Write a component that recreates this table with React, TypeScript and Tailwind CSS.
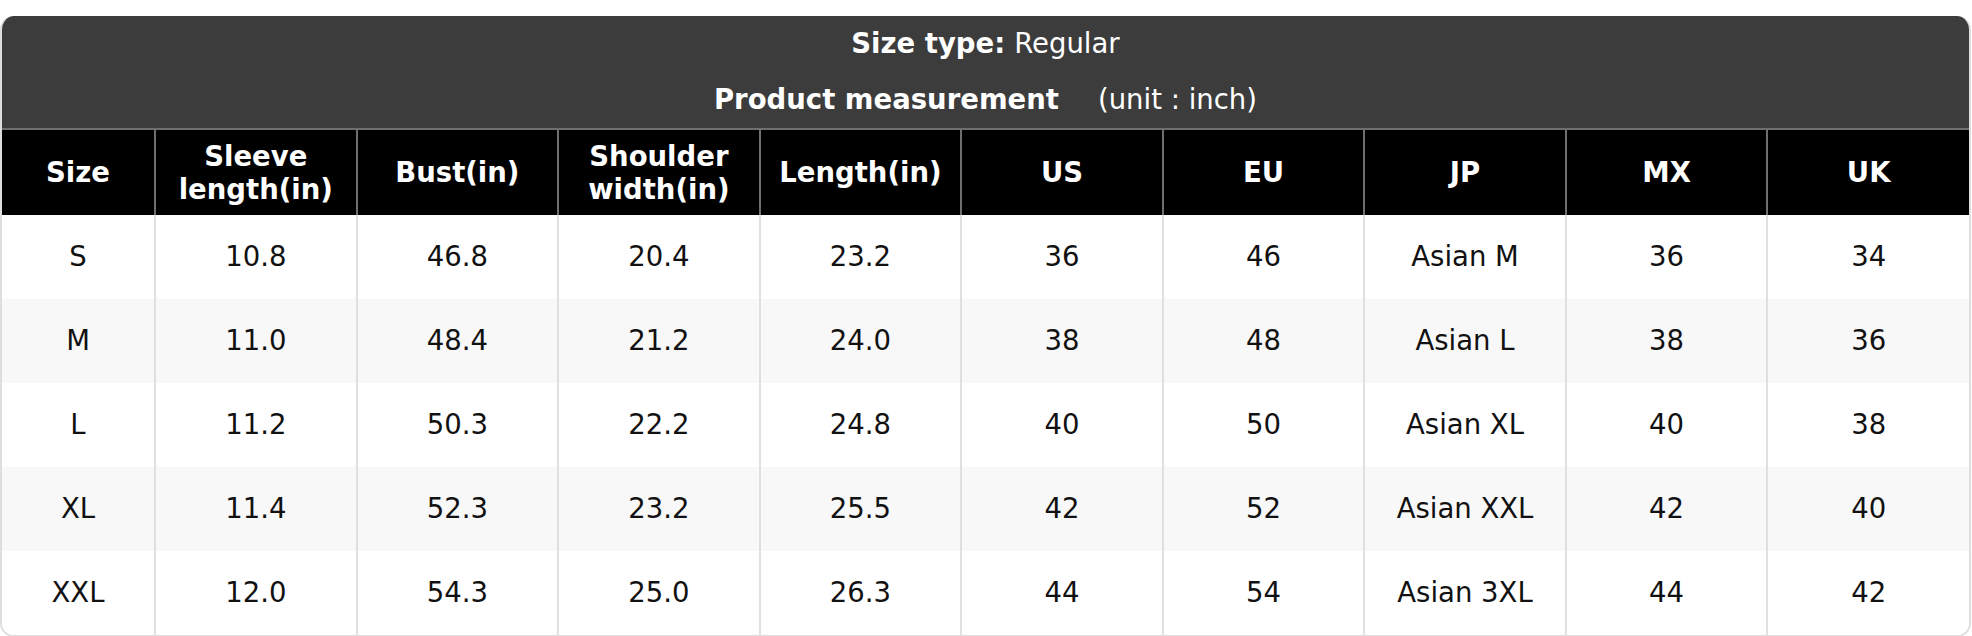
const columns = [
  "Size",
  "Sleeve length(in)",
  "Bust(in)",
  "Shoulder width(in)",
  "Length(in)",
  "US",
  "EU",
  "JP",
  "MX",
  "UK",
];

const rows = [
  ["S", "10.8", "46.8", "20.4", "23.2", "36", "46", "Asian M", "36", "34"],
  ["M", "11.0", "48.4", "21.2", "24.0", "38", "48", "Asian L", "38", "36"],
  ["L", "11.2", "50.3", "22.2", "24.8", "40", "50", "Asian XL", "40", "38"],
  ["XL", "11.4", "52.3", "23.2", "25.5", "42", "52", "Asian XXL", "42", "40"],
  ["XXL", "12.0", "54.3", "25.0", "26.3", "44", "54", "Asian 3XL", "44", "42"],
];

export default function App() {
  return (
    <div className="min-h-screen bg-white pt-[16px] font-['DejaVu_Sans',sans-serif] text-[27.5px]">
      <div className="w-[1971px] overflow-hidden rounded-[14px] border-x-2 border-b-2 border-[#dedede] bg-white">
        {/* Title block */}
        <div className="bg-[#3c3c3c] text-white">
          <div className="flex h-[56px] items-center justify-center">
            <span className="font-bold">Size type:</span>
            <span className="ml-[9px]">Regular</span>
          </div>
          <div className="flex h-[56px] items-center justify-center">
            <span className="font-bold">Product measurement</span>
            <span className="ml-[39px]">(unit : inch)</span>
          </div>
        </div>

        <table className="w-full table-fixed border-collapse">
          <colgroup>
            <col className="w-[153px]" />
            {columns.slice(1).map((c) => (
              <col key={c} />
            ))}
          </colgroup>
          <thead>
            <tr className="h-[86px] border-t-2 border-[#6f6f6f] bg-black text-white">
              {columns.map((c, i) => (
                <th
                  key={c}
                  className={`px-2 text-center align-middle font-bold leading-[33px] ${
                    i === 0 ? "" : "border-l-2 border-[#6f6f6f]"
                  }`}
                >
                  {c === "Sleeve length(in)" ? (
                    <>
                      Sleeve
                      <br />
                      length(in)
                    </>
                  ) : c === "Shoulder width(in)" ? (
                    <>
                      Shoulder
                      <br />
                      width(in)
                    </>
                  ) : (
                    c
                  )}
                </th>
              ))}
            </tr>
          </thead>
          <tbody>
            {rows.map((row, r) => (
              <tr
                key={row[0]}
                className={`h-[84px] ${r % 2 === 1 ? "bg-[#f8f8f8]" : "bg-white"}`}
              >
                {row.map((cell, i) => (
                  <td
                    key={i}
                    className={`text-center align-middle text-[#111] ${
                      i === 0 ? "" : "border-l-2 border-[#e0e0e0]"
                    }`}
                  >
                    {cell}
                  </td>
                ))}
              </tr>
            ))}
          </tbody>
        </table>
      </div>
    </div>
  );
}
